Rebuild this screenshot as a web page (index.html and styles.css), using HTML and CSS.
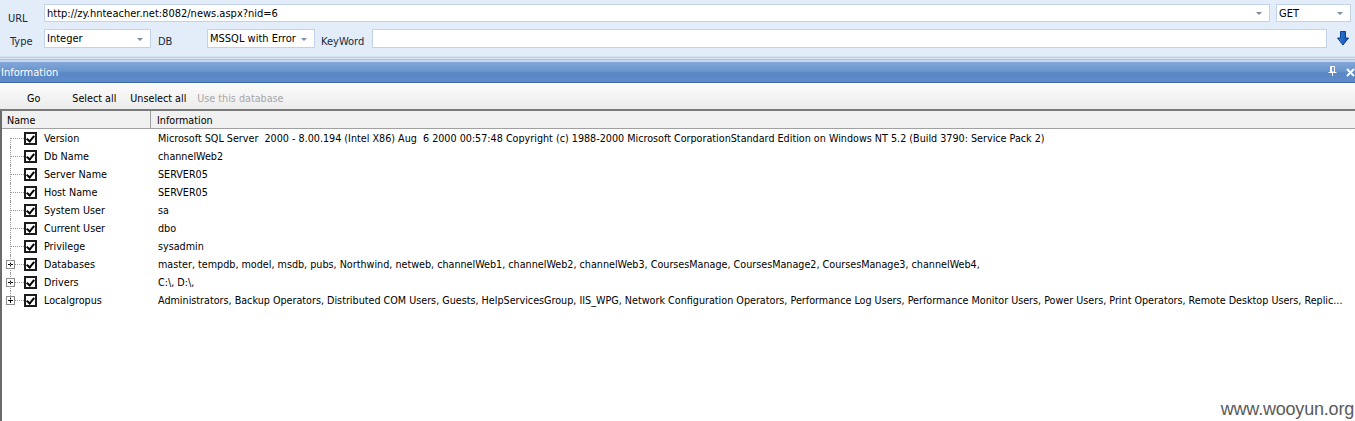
FILE: index.html
```html
<!DOCTYPE html>
<html>
<head>
<meta charset="utf-8">
<link rel="stylesheet" href="styles.css">
</head>
<body>
<div class="app">
  <div class="top">
    <div class="row r1">
      <span class="lbl lbl-url">URL</span>
      <div class="field combo url"><span class="val">http://zy.hnteacher.net:8082/news.aspx?nid=6</span><span class="arr"></span></div>
      <div class="field combo method"><span class="val">GET</span><span class="arr"></span></div>
    </div>
    <div class="row r2">
      <span class="lbl lbl-type">Type</span>
      <div class="field combo type"><span class="val">Integer</span><span class="arr"></span></div>
      <span class="lbl lbl-db">DB</span>
      <div class="field combo dbsel"><span class="val">MSSQL with Error</span><span class="arr"></span></div>
      <span class="lbl lbl-kw">KeyWord</span>
      <div class="field kwin"></div>
      <svg class="down" width="12" height="15" viewBox="0 0 12 15"><defs><linearGradient id="g1" x1="0" y1="0" x2="1" y2="0"><stop offset="0" stop-color="#3b7fd6"/><stop offset="1" stop-color="#0d4fb0"/></linearGradient></defs><path d="M3.5 0.5 H8.5 V7 H11.5 L6 14 L0.5 7 H3.5 Z" fill="url(#g1)" stroke="#0b3f8f" stroke-width="1"/></svg>
    </div>
  </div>
  <div class="sep"></div>
  <div class="titlebar">
    <span class="ttl">Information</span>
    <span class="tbtns">
      <svg width="9" height="10" viewBox="0 0 9 10"><path d="M2.5 0.5 H6.5 V6 H2.5 Z M3.5 1 V6 M0.5 6.5 H8.5 M4.5 7 V10" fill="none" stroke="#fff" stroke-width="1"/></svg>
      <svg width="9" height="9" viewBox="0 0 9 9"><path d="M1 1 L8 8 M8 1 L1 8" stroke="#fff" stroke-width="2"/></svg>
    </span>
  </div>
  <div class="toolbar">
    <span class="tb tb-go">Go</span>
    <span class="tb tb-sel">Select all</span>
    <span class="tb tb-unsel">Unselect all</span>
    <span class="tb tb-use dis">Use this database</span>
  </div>
  <div class="grid">
    <div class="ghead">
      <div class="hc hc-name">Name</div>
      <div class="hc hc-info">Information</div>
    </div>
    <div class="rows">
      <div class="gr first"><div class="nc"><span class="tree"></span><span class="cb"></span><span class="nm">Version</span></div><div class="ic">Microsoft SQL Server&nbsp; 2000 - 8.00.194 (Intel X86) Aug&nbsp; 6 2000 00:57:48 Copyright (c) 1988-2000 Microsoft CorporationStandard Edition on Windows NT 5.2 (Build 3790: Service Pack 2)</div></div>
      <div class="gr"><div class="nc"><span class="tree"></span><span class="cb"></span><span class="nm">Db Name</span></div><div class="ic">channelWeb2</div></div>
      <div class="gr"><div class="nc"><span class="tree"></span><span class="cb"></span><span class="nm">Server Name</span></div><div class="ic">SERVER05</div></div>
      <div class="gr"><div class="nc"><span class="tree"></span><span class="cb"></span><span class="nm">Host Name</span></div><div class="ic">SERVER05</div></div>
      <div class="gr"><div class="nc"><span class="tree"></span><span class="cb"></span><span class="nm">System User</span></div><div class="ic">sa</div></div>
      <div class="gr"><div class="nc"><span class="tree"></span><span class="cb"></span><span class="nm">Current User</span></div><div class="ic">dbo</div></div>
      <div class="gr"><div class="nc"><span class="tree"></span><span class="cb"></span><span class="nm">Privilege</span></div><div class="ic">sysadmin</div></div>
      <div class="gr"><div class="nc"><span class="tree plus"></span><span class="cb"></span><span class="nm">Databases</span></div><div class="ic">master, tempdb, model, msdb, pubs, Northwind, netweb, channelWeb1, channelWeb2, channelWeb3, CoursesManage, CoursesManage2, CoursesManage3, channelWeb4,</div></div>
      <div class="gr"><div class="nc"><span class="tree plus"></span><span class="cb"></span><span class="nm">Drivers</span></div><div class="ic">C:\, D:\,</div></div>
      <div class="gr last"><div class="nc"><span class="tree plus"></span><span class="cb"></span><span class="nm">Localgropus</span></div><div class="ic">Administrators, Backup Operators, Distributed COM Users, Guests, HelpServicesGroup, IIS_WPG, Network Configuration Operators, Performance Log Users, Performance Monitor Users, Power Users, Print Operators, Remote Desktop Users, Replic...</div></div>
    </div>
    <div class="wm">www.wooyun.org</div>
  </div>
</div>
</body>
</html>
```

FILE: styles.css
```css
* { box-sizing: border-box; }
html, body { margin: 0; padding: 0; }
body {
  width: 1355px;
  height: 421px;
  overflow: hidden;
  background: #fff;
  font-family: "DejaVu Sans Condensed", "Liberation Sans", Arial, sans-serif;
  font-size: 10.7px;
  color: #000;
}
.app { display: flex; flex-direction: column; height: 421px; }

/* top parameter panel */
.top {
  height: 56px;
  background: #e3edf9;
  padding-top: 4px;
}
.row { display: flex; align-items: flex-start; }
.r1 { height: 18px; }
.r2 { margin-top: 6px; height: 20px; }
.lbl { color: #15293f; font-size: 11px; }
.lbl-url { width: 44px; padding-left: 8px; margin-top: 8px; }
.lbl-type { width: 44px; padding-left: 10px; margin-top: 7px; }
.lbl-db { width: 56px; padding-left: 7px; margin-top: 7px; }
.lbl-kw { width: 57px; padding-left: 6px; margin-top: 7px; }
.field {
  background: #fff;
  border: 1px solid #c2d3e6;
  height: 18px;
  display: flex;
  align-items: center;
  padding-left: 2px;
  color: #000;
  font-size: 11px;
}
.combo .val { flex: 1; white-space: nowrap; overflow: hidden; }
.arr {
  width: 0; height: 0;
  border-left: 3px solid transparent;
  border-right: 3px solid transparent;
  border-top: 3px solid #7b8ea4;
  margin-right: 7px;
  margin-top: 1px;
}
.url { width: 1226px; }
.method { width: 75px; margin-left: 6px; }
.r2 .field { height: 19px; margin-top: 1px; }
.type { width: 107px; }
.dbsel { width: 108px; }
.kwin { width: 955px; }
.down { margin-left: 10px; margin-top: 3px; }

/* separator stripes */
.sep {
  height: 6px;
  background: linear-gradient(#d7e4f4 0, #d7e4f4 1px, #b7cde9 1px, #b7cde9 2px, #dce8f6 2px, #dce8f6 3px, #a9c3e4 3px, #a9c3e4 4px, #c6d8ef 4px, #c6d8ef 6px);
}

/* title bar */
.titlebar {
  height: 21px;
  background: linear-gradient(#83a7d8 0, #6b95cf 45%, #5a87c6 55%, #5f8bc9 100%);
  border-bottom: 1px solid #3d6aa8;
  display: flex;
  align-items: center;
  justify-content: space-between;
  color: #fff;
  padding-left: 1px;
}
.ttl { font-size: 11px; }
.tbtns { display: flex; align-items: center; gap: 9px; }
.tbtns svg:first-child { margin-top: -2px; }

/* toolbar */
.toolbar {
  height: 28px;
  background: linear-gradient(#fbfbfb, #ececec);
  border-top: 1px solid #ffffff;
  border-bottom: 2px solid #7a7a7a;
  display: flex;
  align-items: center;
  padding-top: 4px;
}
.tb { color: #000; white-space: nowrap; }
.tb-go { margin-left: 27px; }
.tb-sel { margin-left: 32px; }
.tb-unsel { margin-left: 14px; }
.tb-use { margin-left: 11px; }
.dis { color: #a7a7a7; }

/* grid */
.grid {
  flex: 1;
  position: relative;
  border-left: 2px solid #6b6b6b;
  background: #fff;
}
.ghead {
  display: flex;
  height: 18px;
  background: #f0f0f0;
  border-bottom: 1px solid #a0a0a0;
}
.hc { display: flex; align-items: center; white-space: nowrap; padding-top: 2px; }
.hc-name { width: 149px; padding-left: 5px; border-right: 1px solid #a0a0a0; }
.hc-info { padding-left: 6px; }
.rows { display: flex; flex-direction: column; }
.gr { display: flex; height: 18px; align-items: center; }
.nc { width: 150px; display: flex; align-items: center; height: 18px; }
.tree {
  width: 22px;
  height: 18px;
  position: relative;
  flex: none;
}
.tree::before {
  content: "";
  position: absolute;
  left: 8px; top: 0; bottom: 0;
  border-left: 1px dotted #9a9a9a;
}
.gr.first .tree::before { top: 9px; }
.gr.last .tree::before { bottom: 9px; }
.tree::after {
  content: "";
  position: absolute;
  left: 9px; right: 0; top: 9px;
  border-top: 1px dotted #9a9a9a;
}
.tree.plus::before, .tree.plus::after { z-index: -1; }
.tree.plus::after { left: 13px; }
.tree.plus {
  background-image:
    linear-gradient(#000, #000),
    linear-gradient(#000, #000),
    linear-gradient(#fff, #fff),
    linear-gradient(#8c8c8c, #8c8c8c);
  background-position: 6px 9px, 8px 7px, 5px 6px, 4px 5px;
  background-size: 5px 1px, 1px 5px, 7px 7px, 9px 9px;
  background-repeat: no-repeat;
  z-index: 0;
}
.cb {
  flex: none;
  width: 13px;
  height: 13px;
  border: 2px solid #1c1c1c;
  background: #fff;
  position: relative;
}
.cb::after {
  content: "";
  position: absolute;
  left: 2px; top: 0;
  width: 3px; height: 6px;
  border-right: 2px solid #000;
  border-bottom: 2px solid #000;
  transform: rotate(40deg);
}
.nm { margin-left: 7px; white-space: nowrap; }
.ic {
  flex: 1;
  min-width: 0;
  padding-left: 6px;
  white-space: nowrap;
  overflow: hidden;
}
.wm {
  position: absolute;
  right: 1px;
  bottom: 1px;
  font-family: "Liberation Sans", Arial, sans-serif;
  font-size: 18px;
  color: #5a5a5a;
  letter-spacing: -0.2px;
}
```
